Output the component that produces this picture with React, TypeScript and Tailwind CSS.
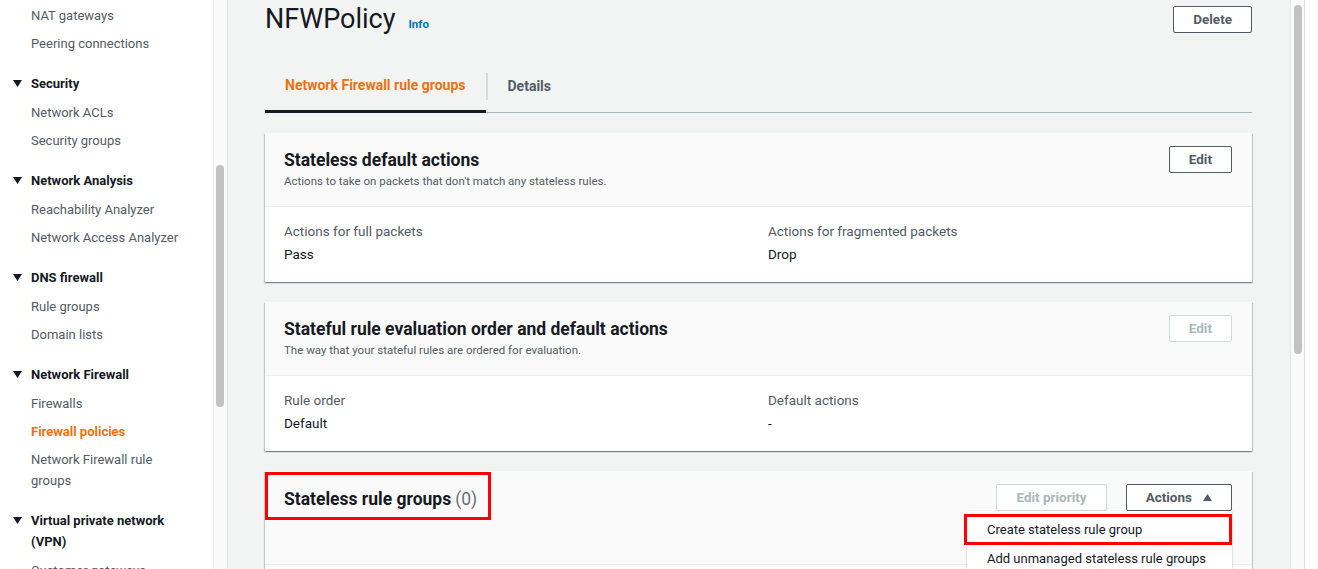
import React from 'react';

const font = { fontFamily: 'Roboto, "Liberation Sans", sans-serif' };

interface NavSection {
    title?: string;
    items: { label: string; active?: boolean }[];
}

const sections: NavSection[] = [
    { items: [{ label: 'NAT gateways' }, { label: 'Peering connections' }] },
    { title: 'Security', items: [{ label: 'Network ACLs' }, { label: 'Security groups' }] },
    { title: 'Network Analysis', items: [{ label: 'Reachability Analyzer' }, { label: 'Network Access Analyzer' }] },
    { title: 'DNS firewall', items: [{ label: 'Rule groups' }, { label: 'Domain lists' }] },
    {
        title: 'Network Firewall',
        items: [
            { label: 'Firewalls' },
            { label: 'Firewall policies', active: true },
            { label: 'Network Firewall rule groups' },
        ],
    },
    { title: 'Virtual private network (VPN)', items: [{ label: 'Customer gateways' }] },
];

function Caret({ up }: { up?: boolean }) {
    return (
        <svg width="9" height="7" viewBox="0 0 9 7" className="flex-shrink-0">
            <polygon points={up ? '0,7 9,7 4.5,0' : '0,0 9,0 4.5,7'} fill="currentColor" />
        </svg>
    );
}

function Sidebar() {
    return (
        <div className="flex h-full flex-shrink-0">
            <nav className="w-[213px] bg-white pt-px text-[13px] text-[#545b64] overflow-hidden">
                {sections.map((section, i) => (
                    <div key={i} className={i > 0 ? 'mt-[11px]' : ''}>
                        {section.title && (
                            <div className="flex items-start py-[4.5px] pl-[13px] pr-4 font-bold text-[#16191f] leading-[21px]">
                                <span className="w-[18px] h-[21px] flex items-center flex-shrink-0">
                                    <Caret />
                                </span>
                                <span>{section.title}</span>
                            </div>
                        )}
                        {section.items.map((item) => (
                            <div
                                key={item.label}
                                className={
                                    'py-[3.5px] pl-[31px] pr-8 leading-[21px] ' +
                                    (item.active ? 'font-bold text-[#ec7211]' : '')
                                }
                            >
                                {item.label}
                            </div>
                        ))}
                    </div>
                ))}
            </nav>
            {/* Sidebar scrollbar */}
            <div className="w-[15px] bg-[#fafafa] border-l border-[#ececec] border-r border-r-[#e1e4e4] pt-[165px] pl-[2px]">
                <div className="w-[8px] h-[242px] rounded-full bg-[#c2c2c2]"></div>
            </div>
        </div>
    );
}

function Button({ label, disabled, caret }: { label: string; disabled?: boolean; caret?: boolean }) {
    return (
        <div
            className={
                'h-[27px] flex items-center justify-center gap-[11px] px-[19px] rounded-[2px] border bg-white text-[13.5px] font-bold ' +
                (disabled ? 'border-[#d5dbdb] text-[#aab7b8]' : 'border-[#545b64] text-[#545b64]')
            }
        >
            <span>{label}</span>
            {caret && <Caret up />}
        </div>
    );
}

const cardShadow =
    'bg-white shadow-[0_1px_1px_0_rgba(0,28,36,0.3),1px_1px_1px_0_rgba(0,28,36,0.15),-1px_1px_1px_0_rgba(0,28,36,0.15)]';

function KeyValueCard({
    title,
    subtitle,
    disabledEdit,
    left,
    right,
}: {
    title: string;
    subtitle: string;
    disabledEdit?: boolean;
    left: [string, string];
    right: [string, string];
}) {
    return (
        <div className={cardShadow}>
            <div className="flex justify-between items-start bg-[#fafafa] border-b border-[#eaeded] pl-[19px] pr-5 pt-4 pb-4">
                <div>
                    <h2 className="text-[17.5px] leading-[22px] font-bold text-[#16191f]">{title}</h2>
                    <p className="mt-px text-[11.5px] leading-[18px] text-[#545b64]">{subtitle}</p>
                </div>
                <div className="-mt-[3px]">
                    <Button label="Edit" disabled={disabledEdit} />
                </div>
            </div>
            <div className="grid grid-cols-2 pl-[19px] pr-5 pt-[14px] pb-[18px] text-[13.5px] leading-[20px]">
                <div>
                    <div className="text-[#545b64]">{left[0]}</div>
                    <div className="mt-[3px] text-[#16191f]">{left[1]}</div>
                </div>
                <div className="pl-[10px]">
                    <div className="text-[#545b64]">{right[0]}</div>
                    <div className="mt-[3px] text-[#16191f]">{right[1]}</div>
                </div>
            </div>
        </div>
    );
}

export default function App() {
    return (
        <div className="flex w-[1318px] h-[569px] overflow-hidden bg-white" style={font}>
            <Sidebar />

            <main className="flex-1 bg-[#f2f3f3] pl-[37px] pr-[38px] pt-[6px] overflow-hidden">
                {/* Page header */}
                <div className="flex items-center justify-between h-[27px]">
                    <div className="flex items-baseline gap-[13px]">
                        <h1 className="text-[27px] leading-none text-[#16191f]">NFWPolicy</h1>
                        <a className="text-[11.5px] font-bold text-[#0073bb]">Info</a>
                    </div>
                    <Button label="Delete" />
                </div>

                {/* Tabs */}
                <div className="mt-[28px] flex border-b border-[#aab7b8] h-[52px]">
                    <div className="flex items-center px-5 border-b-[3px] border-[#16191f] -mb-px text-[14px] font-bold text-[#ec7211]">
                        Network Firewall rule groups
                    </div>
                    <div className="flex items-center">
                        <div className="w-[2px] h-[27px] bg-[#d5dbdb]"></div>
                    </div>
                    <div className="flex items-center px-5 text-[14px] font-bold text-[#545b64]">Details</div>
                </div>

                <div className="mt-5 flex flex-col gap-5">
                    <KeyValueCard
                        title="Stateless default actions"
                        subtitle="Actions to take on packets that don't match any stateless rules."
                        left={['Actions for full packets', 'Pass']}
                        right={['Actions for fragmented packets', 'Drop']}
                    />
                    <KeyValueCard
                        title="Stateful rule evaluation order and default actions"
                        subtitle="The way that your stateful rules are ordered for evaluation."
                        disabledEdit
                        left={['Rule order', 'Default']}
                        right={['Default actions', '-']}
                    />

                    {/* Stateless rule groups */}
                    <div className={cardShadow}>
                        <div className="flex justify-between items-start bg-[#fafafa] border-b border-[#eaeded] pt-px pr-5 h-[94px]">
                            <div className="h-[48px] flex items-center pt-[6px] border-[3px] border-[#ff0000] pl-4 pr-[11px] text-[17.5px] font-bold text-[#16191f]">
                                Stateless rule groups<span className="ml-1 font-normal text-[#687078]">(0)</span>
                            </div>
                            <div className="mt-3 flex gap-[19px]">
                                <Button label="Edit priority" disabled />
                                <div className="relative">
                                    <Button label="Actions" caret />
                                    {/* Dropdown menu */}
                                    <div className="absolute right-0 top-[27px] w-[265px] bg-white shadow-[0_1px_2px_rgba(0,28,36,0.3)] text-[13px] text-[#16191f]">
                                        <div className="mt-[3px] -ml-[3px] h-[31px] flex items-center border-[3px] border-[#ff0000] pl-[20px]">
                                            Create stateless rule group
                                        </div>
                                        <div className="h-[28px] flex items-center pl-5">Add unmanaged stateless rule groups</div>
                                    </div>
                                </div>
                            </div>
                        </div>
                        <div className="h-10"></div>
                    </div>
                </div>
            </main>

            {/* Page scrollbar */}
            <div className="w-[15px] h-full bg-[#fafafa] border-l border-[#e6e8e8] border-r border-r-[#dcdcdc] pt-[5px] pl-[3px]">
                <div className="w-[8px] h-[349px] rounded-full bg-[#c2c2c2]"></div>
            </div>
            <div className="w-[13px] h-full bg-white"></div>
        </div>
    );
}
